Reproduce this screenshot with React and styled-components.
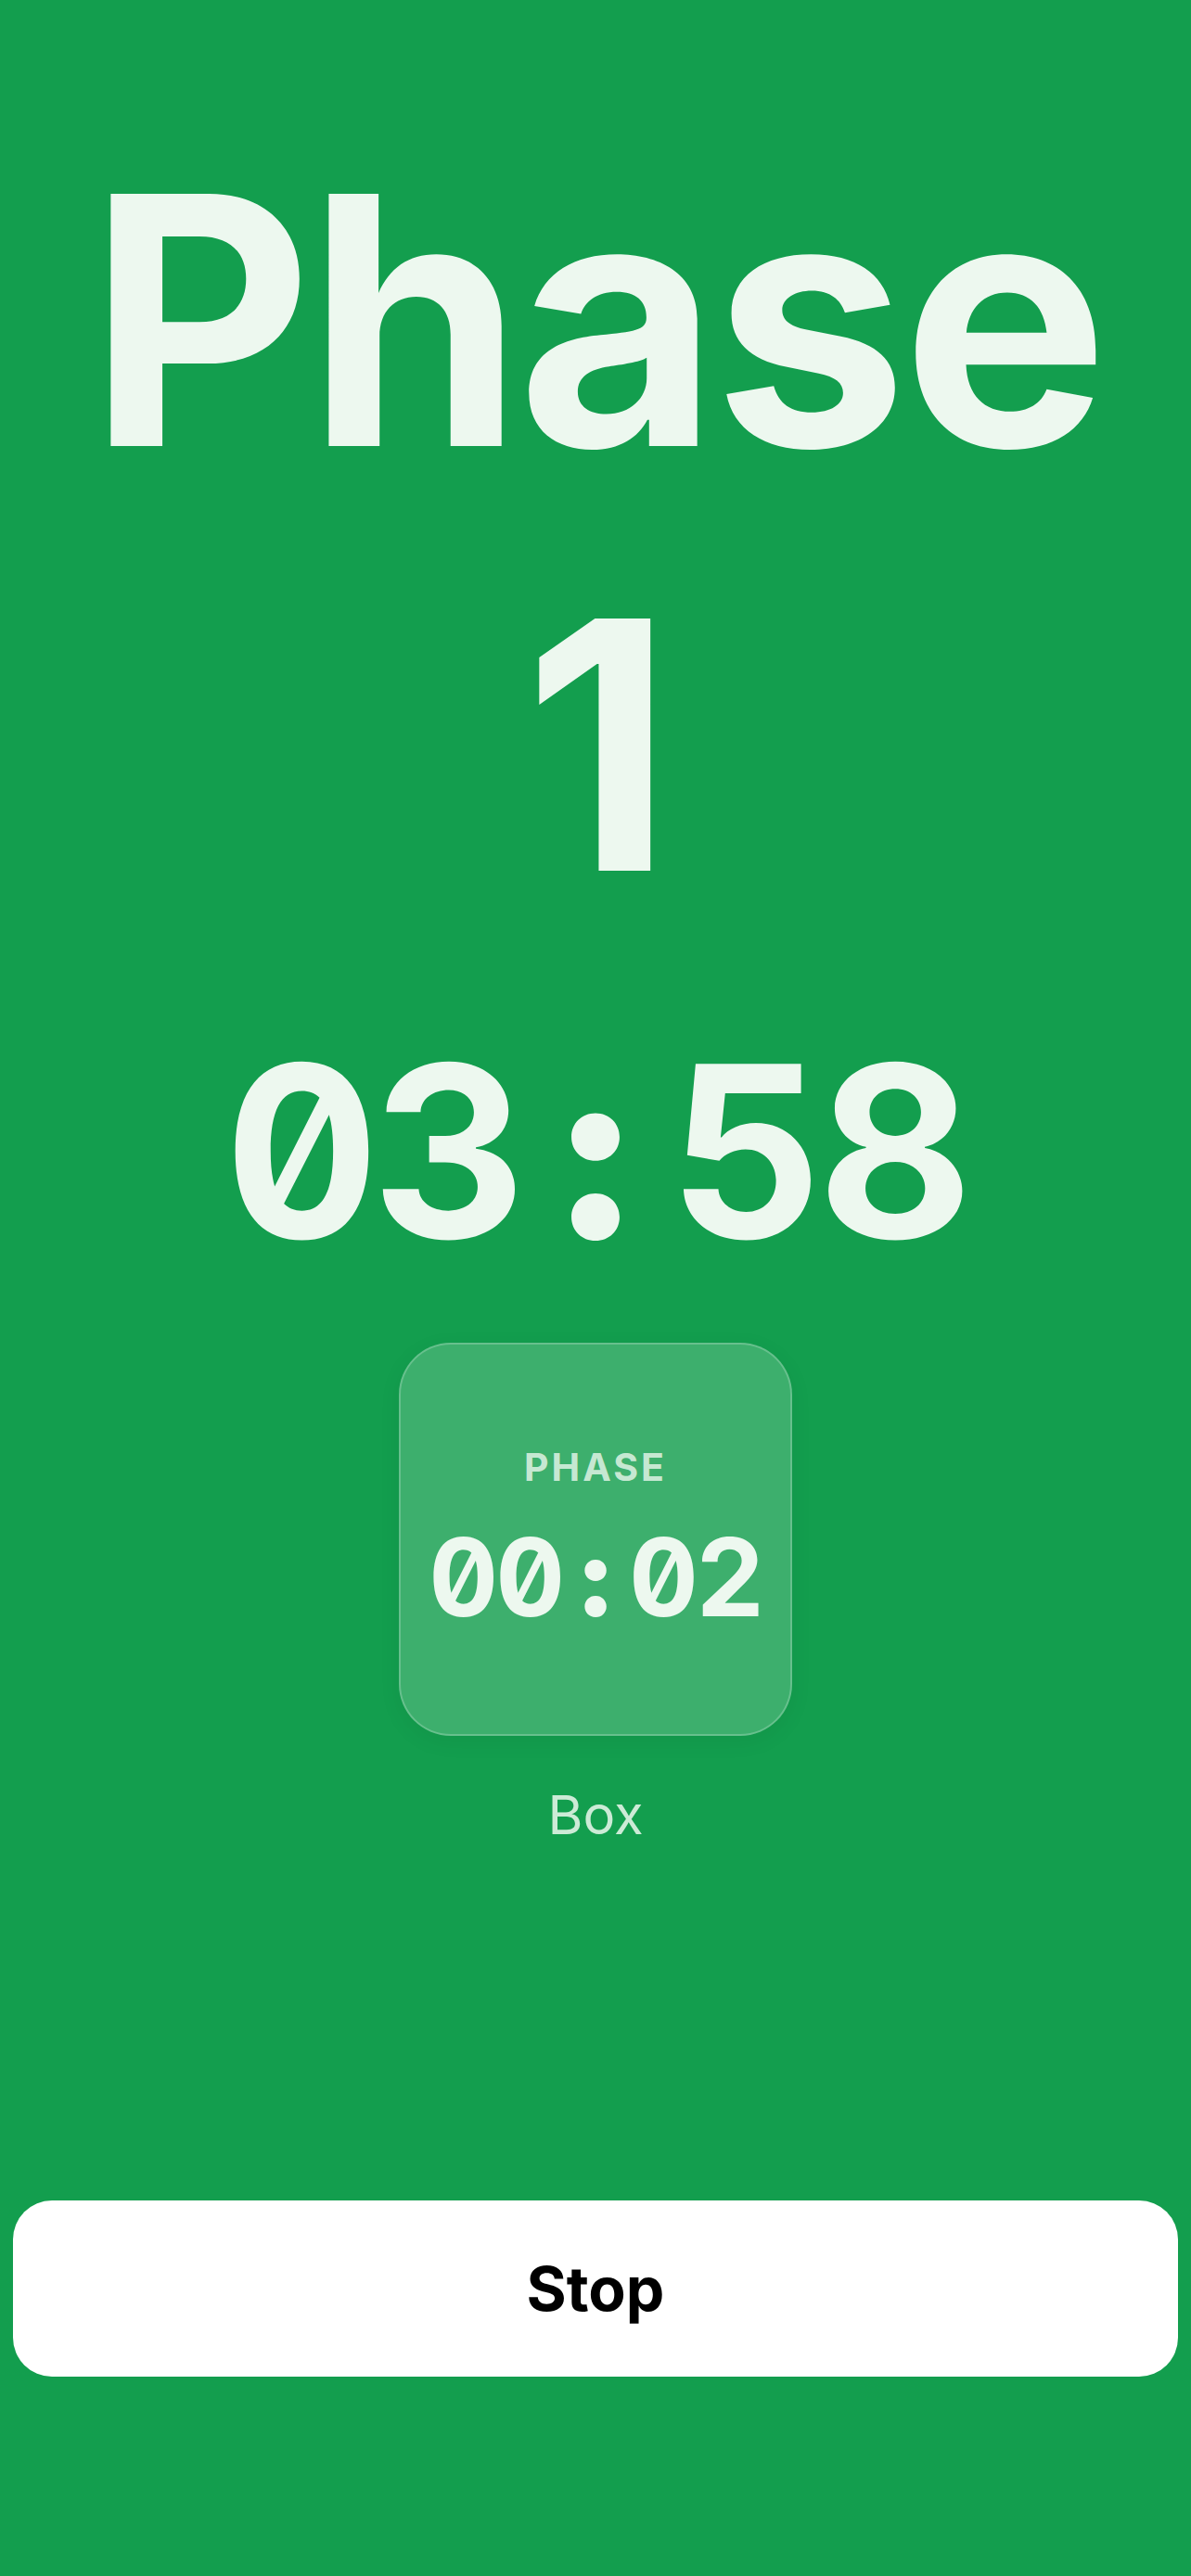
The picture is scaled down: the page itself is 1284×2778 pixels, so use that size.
import React from 'react';
import styled, { createGlobalStyle } from 'styled-components';

const GlobalStyle = createGlobalStyle`
  html, body {
    margin: 0;
    padding: 0;
    background: #139e4e;
  }
  * {
    box-sizing: border-box;
  }
`;

const Screen = styled.div`
  min-height: 100vh;
  background-color: #139e4e;
  display: flex;
  flex-direction: column;
  align-items: center;
  padding: 116px 14px 215px;
  font-family: Inter, "Noto Sans", sans-serif;
`;

const Title = styled.h1`
  margin: 0;
  width: 100%;
  text-align: center;
  font-size: 374px;
  font-weight: 700;
  line-height: 458px;
  letter-spacing: -6px;
  color: #edf8ef;
`;

const Clock = styled.div`
  margin-top: ${({ gap }) => gap}px;
  display: flex;
  font-family: Inter, "Noto Sans", sans-serif;
  font-weight: 700;
  font-size: ${({ size }) => size}px;
  line-height: 1;
  color: #edf8ef;
  font-variant-numeric: tabular-nums slashed-zero;
  font-feature-settings: "tnum" 1, "zero" 1;
`;

const Glyph = styled.span`
  display: inline-block;
  width: 0.62em;
  text-align: center;
  font-weight: ${({ colon }) => (colon ? 900 : 700)};
`;

const Card = styled.div`
  margin-top: 78px;
  width: 424px;
  height: 424px;
  border-radius: 56px;
  background: rgba(255, 255, 255, 0.18);
  border: 2px solid rgba(255, 255, 255, 0.22);
  box-shadow: 0 6px 24px rgba(0, 0, 0, 0.06);
  display: flex;
  flex-direction: column;
  align-items: center;
  justify-content: center;
  gap: 40px;
`;

const CardLabel = styled.div`
  font-size: 41px;
  font-weight: 700;
  letter-spacing: 3px;
  line-height: 1;
  color: rgba(237, 248, 239, 0.8);
`;

const Caption = styled.div`
  margin-top: 50px;
  font-size: 58px;
  font-weight: 400;
  color: rgba(237, 248, 239, 0.85);
`;

const Spacer = styled.div`
  flex: 1;
`;

const StopButton = styled.button`
  width: 100%;
  height: 190px;
  border: none;
  border-radius: 42px;
  background: #ffffff;
  color: #000000;
  font-family: Inter, "Noto Sans", sans-serif;
  font-size: 66px;
  font-weight: 700;
  cursor: pointer;
`;

const Timer = ({ value, size, gap = 0 }) => (
  <Clock size={size} gap={gap}>
    {value.split('').map((ch, i) => (
      <Glyph key={i} colon={ch === ':'}>
        {ch}
      </Glyph>
    ))}
  </Clock>
);

export default function App() {
  return (
    <>
      <GlobalStyle />
      <Screen>
        <Title>Phase 1</Title>
        <Timer value="03:58" size={258} gap={80} />
        <Card>
          <CardLabel>PHASE</CardLabel>
          <Timer value="00:02" size={116} />
        </Card>
        <Caption>Box</Caption>
        <Spacer />
        <StopButton>Stop</StopButton>
      </Screen>
    </>
  );
}
